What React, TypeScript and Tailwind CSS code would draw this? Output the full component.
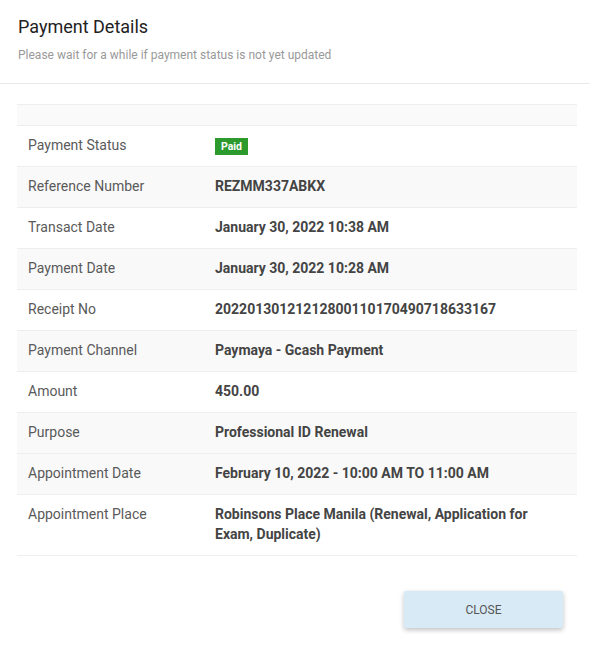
import React from "react";

const rows: { label: string; value?: string; badge?: boolean; gray?: boolean }[] = [
  { label: "Payment Status", badge: true },
  { label: "Reference Number", value: "REZMM337ABKX", gray: true },
  { label: "Transact Date", value: "January 30, 2022 10:38 AM" },
  { label: "Payment Date", value: "January 30, 2022 10:28 AM", gray: true },
  { label: "Receipt No", value: "20220130121212800110170490718633167" },
  { label: "Payment Channel", value: "Paymaya - Gcash Payment", gray: true },
  { label: "Amount", value: "450.00" },
  { label: "Purpose", value: "Professional ID Renewal", gray: true },
  { label: "Appointment Date", value: "February 10, 2022 - 10:00 AM TO 11:00 AM", gray: true },
  { label: "Appointment Place", value: "Robinsons Place Manila (Renewal, Application for Exam, Duplicate)" },
];

export default function App() {
  return (
    <div
      className="w-[590px] h-[657px] bg-white"
      style={{ fontFamily: "Roboto, 'Noto Sans', sans-serif" }}
    >
      <div className="px-[18px] pt-[15px] pb-[20px] border-b border-[#e9e9e9]">
        <div className="text-[18px] leading-[24px] text-[#222]">Payment Details</div>
        <div className="text-[12px] leading-[16px] text-[#999] mt-[8px]">
          Please wait for a while if payment status is not yet updated
        </div>
      </div>
      <div className="pl-[17px] pr-[13px] pt-[20px]">
        <div className="h-[22px] bg-[#fafafa] border-t border-b border-[#eeeeee]" />
        {rows.map((r) => (
          <div
            key={r.label}
            className={`flex border-b border-[#eeeeee] text-[14px] leading-[20px] pt-[9px] pb-[11px] ${
              r.gray ? "bg-[#f9f9f9]" : "bg-white"
            }`}
          >
            <div className="w-[198px] pl-[11px] text-[#5a5a5a]">{r.label}</div>
            <div className="flex-1 pr-[30px] font-bold text-[#444]">
              {r.badge ? (
                <div className="h-[20px] pt-[3px]">
                  <span className="block w-fit bg-[#2c9a2c] text-white text-[10.5px] leading-[17px] px-[6px] font-bold">
                    Paid
                  </span>
                </div>
              ) : (
                r.value
              )}
            </div>
          </div>
        ))}
      </div>
      <div className="flex justify-end pr-[27px] pt-[35px]">
        <button className="w-[159px] h-[37px] bg-[#d8eaf5] text-[#555] text-[12px] rounded-[2px] shadow-[0_2px_5px_rgba(0,0,0,0.25)]">
          CLOSE
        </button>
      </div>
    </div>
  );
}
